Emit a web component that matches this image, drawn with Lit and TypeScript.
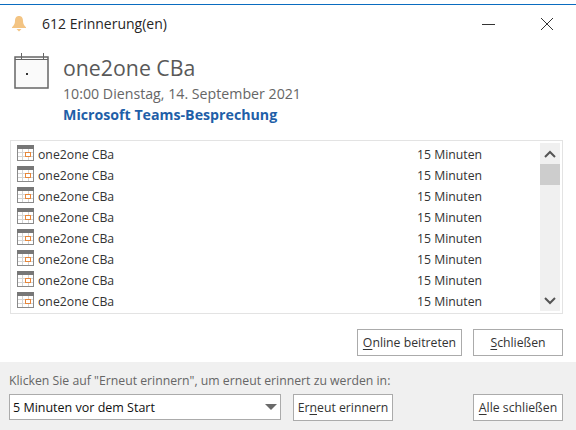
import { LitElement, html, css, svg } from "lit";
import { customElement } from "lit/decorators.js";

const rows = Array.from({ length: 8 });

const rowIcon = svg`<svg class="ri" width="17" height="16" viewBox="0 0 17 16">
  <rect x="0.5" y="0.5" width="16" height="15" fill="#fff" stroke="#8a8a8a"/>
  <rect x="0" y="0" width="17" height="4" fill="#777"/>
  <path d="M5.500 4v11M11.500 4v11M1 7.500h15M1 11.500h15" stroke="#d4d4d4" fill="none"/>
  <rect x="8.500" y="7.500" width="5" height="4" fill="#fff" stroke="#e8873a"/>
</svg>`;

@customElement("app-root")
export class AppRoot extends LitElement {
  static styles = css`
    :host { display: block; width: 576px; height: 430px; background: #fff; font-family: "Open Sans", "Noto Sans", sans-serif; font-size: 12.25px; color: #262626; overflow: hidden; }
    * { box-sizing: border-box; }
    .frame { margin-top: 4px; border-top: 1px solid #0a6cc0; height: 426px; display: flex; flex-direction: column; }
    .title { height: 39px; display: flex; align-items: center; padding: 0 0 2px 11px; flex: none; }
    .title .t { margin-left: 15px; font-size: 14px; color: #262626; }
    .spacer { flex: 1; }
    .wbtn { width: 46px; height: 37px; display: flex; align-items: center; justify-content: center; }
    .wbtn.min { margin-right: 12px; }
    .wbtn.close { margin-right: 6px; }
    .head { display: flex; height: 96px; padding-left: 14px; flex: none; }
    .head svg { margin-top: 9px; }
    .info { margin-left: 13px; display: flex; flex-direction: column; }
    .name { font-size: 21.300px; line-height: 28px; color: #595959; margin-top: 10px; }
    .when { font-size: 14.200px; line-height: 20px; color: #666; margin-top: 2px; }
    .link { font-size: 14.200px; line-height: 20px; font-weight: 700; color: #1f5fa8; margin-top: 1px; }
    .list { margin: 0 13px 0 10px; height: 174px; border: 1px solid #e3e3e3; display: flex; flex: none; padding: 2px 2px 2px 0; }
    .rows { flex: 1; padding: 1px 0 0 6px; overflow: hidden; }
    .row { height: 21px; display: flex; align-items: center; }
    .row .n { margin-left: 4px; flex: none; width: 379px; color: #333; }
    .row .m { color: #333; }
    .ri { flex: none; align-self: flex-start; margin-top: 1px; }
    .sb { width: 20px; background: #f0f0f0; display: flex; flex-direction: column; }
    .sb .arrow { height: 21px; flex: none; display: flex; align-items: center; justify-content: center; }
    .sb .thumb { height: 21px; background: #cdcdcd; flex: none; }
    .sb .track { flex: 1; }
    .actions { display: flex; justify-content: flex-end; gap: 11px; padding: 15px 13px 0 0; height: 48px; flex: none; }
    .btn { height: 27px; border: 1px solid #ababab; background: #fff; display: flex; align-items: center; justify-content: center; color: #333; padding: 0; flex: none; }
    .btn u { text-underline-offset: 2px; }
    .b-online { width: 105px; }
    .b-close { width: 90px; }
    .b-again { width: 100px; margin-left: 12px; }
    .footer { flex: 1; background: #f0f0f0; padding: 10px 13px 0 9px; }
    .hint { color: #666; line-height: 18px; height: 22px; }
    .controls { display: flex; align-items: flex-start; }
    .select { width: 272px; height: 26px; background: #fff; border: 1px solid #ababab; display: flex; align-items: center; padding: 0 3px 0 3px; color: #111; font-size: 12.500px; flex: none; }
    .select .arr { width: 0; height: 0; margin-left: auto; border-left: 6.500px solid transparent; border-right: 6.500px solid transparent; border-top: 6px solid #6a6a6a; }
    .b-all { margin-left: auto; width: 90px; }
  `;

  render() {
    return html`<div class="frame">
      <div class="title">
        <svg width="16" height="17" viewBox="0 0 16 17">
          <path d="M8 1C5 1 4 3.200 4 6c0 3-1.200 4.600-3 6.200V13h14v-.8C13.200 10.600 12 9 12 6c0-2.800-1-5-4-5z" fill="#f3c483"/>
          <path d="M5.500 14h5L8 16.500z" fill="#f3c483"/>
        </svg>
        <span class="t">612 Erinnerung(en)</span>
        <span class="spacer"></span>
        <div class="wbtn min"><svg width="14" height="14" viewBox="0 0 14 14"><path d="M0 7.500h13" stroke="#333" fill="none"/></svg></div>
        <div class="wbtn close"><svg width="14" height="14" viewBox="0 0 14 14"><path d="M1 1l12 12M13 1L1 13" stroke="#333" fill="none"/></svg></div>
      </div>
      <div class="head">
        <svg width="36" height="36" viewBox="0 0 36 36">
          <rect x="1" y="4" width="33" height="31" fill="#fafafa" stroke="#666" stroke-width="1.500"/>
          <path d="M1 6.500h33M7.500 0v7M29.500 0v7" stroke="#666" fill="none"/>
          <rect x="12" y="20" width="2" height="2" fill="#333"/>
        </svg>
        <div class="info">
          <div class="name">one2one CBa</div>
          <div class="when">10:00 Dienstag, 14. September 2021</div>
          <div class="link">Microsoft Teams-Besprechung</div>
        </div>
      </div>
      <div class="list">
        <div class="rows">
          ${rows.map(
            () => html`<div class="row">${rowIcon}<span class="n">one2one CBa</span><span class="m">15 Minuten</span></div>`
          )}
        </div>
        <div class="sb">
          <div class="arrow"><svg width="12" height="8" viewBox="0 0 12 8"><path d="M1 7l5-5 5 5" stroke="#555" stroke-width="2" fill="none"/></svg></div>
          <div class="thumb"></div>
          <div class="track"></div>
          <div class="arrow"><svg width="12" height="8" viewBox="0 0 12 8"><path d="M1 1l5 5 5-5" stroke="#555" stroke-width="2" fill="none"/></svg></div>
        </div>
      </div>
      <div class="actions">
        <div class="btn b-online"><span><u>O</u>nline beitreten</span></div>
        <div class="btn b-close"><span><u>S</u>chließen</span></div>
      </div>
      <div class="footer">
        <div class="hint">Klicken Sie auf "Erneut erinnern", um erneut erinnert zu werden in:</div>
        <div class="controls">
          <div class="select"><span>5 Minuten vor dem Start</span><span class="arr"></span></div>
          <div class="btn b-again"><span>Er<u>n</u>eut erinnern</span></div>
          <div class="btn b-all"><span><u>A</u>lle schließen</span></div>
        </div>
      </div>
    </div>`;
  }
}
